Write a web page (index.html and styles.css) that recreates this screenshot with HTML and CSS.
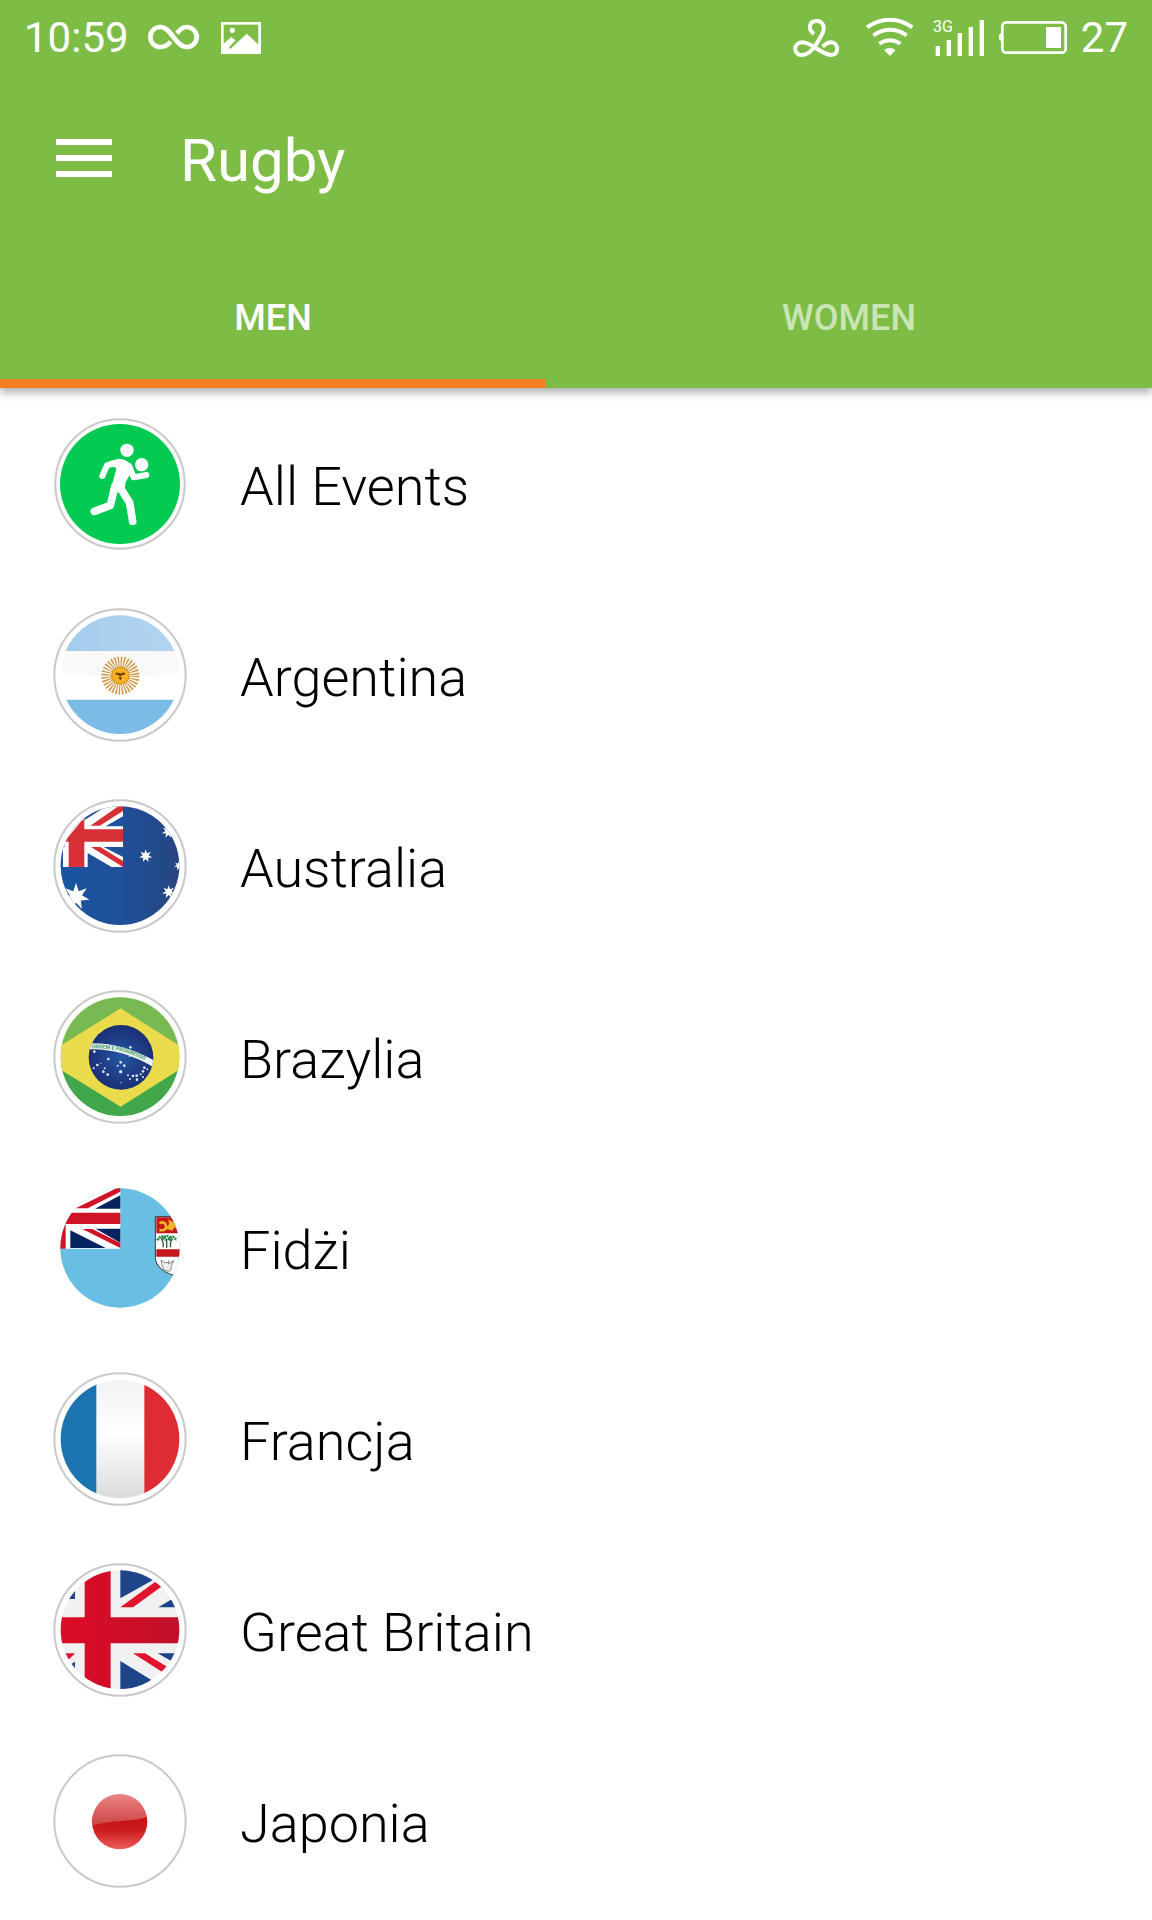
FILE: index.html
```html
<!DOCTYPE html>
<html lang="pl">
<head>
<meta charset="utf-8">
<meta name="viewport" content="width=device-width, initial-scale=1">
<title>Rugby</title>
<link rel="stylesheet" href="styles.css">
</head>
<body>
<header class="header">
  <div class="status">
    <div class="status-left">
    <span>10:59</span>
    <svg width="56" height="40" viewBox="438 54 168 120" aria-hidden="true"><path class="line butt" stroke-width="14" d="M515 125C504 139 495 141 484 141a30 30 0 1 1 0-60c33 0 45 60 79 60a30 30 0 1 0 0-60c-11 0-19 5-29 19"/></svg>
    <svg width="48" height="40" viewBox="648 54 144 120" aria-hidden="true"><rect class="line" x="664" y="70" width="112" height="88" stroke-width="8"/><circle class="solid" cx="694" cy="91" r="8"/><path class="solid" d="M664 134l27-23 13 10-20 20 4 6 49-46 41 38v22H664z"/></svg>
    </div>
    <div class="status-right">
    <svg width="58" height="40" viewBox="54 54 174 120" aria-hidden="true"><path class="line butt" stroke-width="12" d="M129 102C109 87 115 63 136 63c22 0 28 22 16 42C138 130 120 165 92 165c-26 0-26-37 2-38 30 0 56 38 88 38 22 0 22-38-2-38-11 0-16 5-25 13"/></svg>
    <svg width="58" height="40" viewBox="270 54 174 120" aria-hidden="true"><path class="line butt" stroke-width="12" d="M288 82q69-46 136 0M307 106q50-33 100 0M325 131q32-21 63 0"/><path class="solid" d="M339 150q17-12 35 0l-17 18z"/></svg>
    <svg width="52" height="40" viewBox="486 54 156 120" aria-hidden="true"><text class="network" x="486" y="95">3G</text><path class="solid" d="M494 138h13v30h-13zM527 120h13v48h-13zM560 99h13v69h-13zM593 81h13v87h-13zM626 60h13v108h-13z"/></svg>
    <svg width="68" height="40" viewBox="687 54 204 120" aria-hidden="true"><rect class="line" x="697" y="67" width="190" height="91" rx="12" stroke-width="8"/><path class="solid" d="M694 99v24q-7-2-7-7v-10q0-5 7-7zM828 81h45v63h-45z"/></svg>
    <span>27</span>
    </div>
  </div>
  <div class="toolbar">
    <button class="menu" type="button" aria-label="Menu"><svg width="56" height="38" viewBox="0 0 56 38"><path class="solid" d="M0 0h56v6H0zM0 16h56v6H0zM0 32h56v6H0z"/></svg></button>
    <h1 class="title">Rugby</h1>
  </div>
  <div class="tabs" role="tablist">
    <button class="tab tab-men" type="button" role="tab" aria-selected="true">MEN</button>
    <button class="tab tab-women" type="button" role="tab" aria-selected="false">WOMEN</button>
  </div>
</header>
<main>
<ul class="list">
  <li><a class="row" href="#all">
    <svg class="badge" viewBox="38 33 402 402" aria-hidden="true"><circle class="ring" cx="239" cy="234" r="194"/><circle fill="#05ca51" cx="239" cy="234" r="180"/>
      <g class="solid"><circle cx="260" cy="133" r="20"/><circle cx="304" cy="176" r="20"/><path d="M205 166l34-8q20 4 29 14l8 22-20 34-4 28-36 6-4-12 16-62z"/></g>
      <g class="line"><path stroke-width="18" d="M236 168l-36 10-14 32M266 180l14 34 38-7"/><path stroke-width="23" d="M224 240l-14 58-48 18M240 246l28 44 9 56"/></g></svg>
    <span class="name">All Events</span></a></li>
  <li><a class="row" href="#argentina">
    <svg class="badge" viewBox="38 37 402 402" aria-hidden="true">
      <defs><clipPath id="c-ar"><circle cx="239" cy="237" r="178"/></clipPath><linearGradient id="g-ar" x1="0" x2="1" y2="0"><stop offset="0" stop-color="#a2cdec"/><stop offset="1" stop-color="#b4d4f0"/></linearGradient></defs>
      <circle class="ring" cx="239" cy="238" r="197"/>
      <g clip-path="url(#c-ar)"><path fill="#fff" d="M60 50h360v380H60z"/><path fill="#f9f9f9" d="M60 166h360v64q-180 28-360 0z"/><path fill="url(#g-ar)" d="M60 50h360v116H60z"/><path fill="#7dbbe7" d="M60 312h360v110H60z"/></g>
      <circle cx="240" cy="240" r="42" fill="none" stroke="#cf9a4c" stroke-width="30" pathLength="64" stroke-dasharray="1 1"/><circle cx="240" cy="240" r="26" fill="#f6b21f" stroke="#d8952a" stroke-width="4"/><path fill="#6b3a10" d="M226 231h10l4 4 4-4h10v6h-9v4h-10v-4h-9zM235 244h10v4h-3v5h-4v-5h-3z"/></svg>
    <span class="name">Argentina</span></a></li>
  <li><a class="row" href="#australia">
    <svg class="badge" viewBox="38 40 402 402" aria-hidden="true">
      <defs><clipPath id="c-au"><circle cx="239" cy="240" r="178"/></clipPath><linearGradient id="g-au"><stop offset="0" stop-color="#1a559f"/><stop offset=".5" stop-color="#1f509b"/><stop offset="1" stop-color="#26457f"/></linearGradient>
      <path id="star" d="M0-10l2 6 5.800-2.200-3.400 5.200 5.400 3.200-6.300.6.800 6.200L0 4.500-4.300 9l.8-6.200-6.300-.6 5.400-3.200-3.400-5.200L-2-4z"/></defs>
      <circle class="ring" cx="239" cy="241" r="197"/>
      <g clip-path="url(#c-au)"><path fill="url(#g-au)" d="M60 60h360v362H60z"/>
        <path fill="#fff" d="M50 50h198v194H50z"/><path fill="#1f509b" d="M132 62h66l-66 42zM248 92v30h-52zM190 184h58v30zM142 202l72 42h-72zM50 195l18-6v55H50z"/>
        <path fill="#d62f36" d="M85 168v76h47v-76h116v-37H132v-30l-8 4-52 63zM150 120h28l70-44V62h-14zM152 184h28l68 42v18zM62 190l14-8-14 2z"/>
        <g fill="#fff"><use href="#star" transform="translate(107 333) scale(4.100)"/><use href="#star" transform="translate(316 211) scale(2)"/><use href="#star" transform="translate(384 138) scale(2)"/><use href="#star" transform="translate(416 240) scale(1.500)"/><use href="#star" transform="translate(385 319) scale(2)"/></g></g></svg>
    <span class="name">Australia</span></a></li>
  <li><a class="row" href="#brazylia">
    <svg class="badge" viewBox="38 42 402 402" aria-hidden="true">
      <defs><clipPath id="c-br"><circle cx="239" cy="242" r="178"/></clipPath><clipPath id="c-globe"><circle cx="242" cy="244" r="97"/></clipPath><radialGradient id="g-br"><stop offset="0" stop-color="#2457a5"/><stop offset="1" stop-color="#1b2f74"/></radialGradient></defs>
      <circle class="ring" cx="239" cy="243" r="197"/>
      <g clip-path="url(#c-br)"><path fill="#79b951" d="M60 60h360v182H60z"/><path fill="#42a64a" d="M60 242h360v182H60z"/><path fill="#eadb4c" d="M241 97l194 123v50L241 392 43 270v-50z"/></g>
      <circle cx="242" cy="244" r="97" fill="url(#g-br)"/>
      <g clip-path="url(#c-globe)"><path d="M140 211q106-5 206 56" fill="none" stroke="#e9f4ec" stroke-width="18"/><path id="motto" d="M154 217q100-3 184 50" fill="none"/><text class="motto"><textPath href="#motto">ORDEM E PROGRESSO</textPath></text></g>
      <g fill="#dce6f6"><circle cx="162" cy="227" r="4"/><circle cx="270" cy="214" r="4"/><circle cx="268" cy="240" r="3"/><circle cx="204" cy="249" r="4"/><circle cx="171" cy="267" r="4"/><circle cx="182" cy="262" r="2"/><circle cx="160" cy="277" r="3"/><circle cx="193" cy="277" r="3"/><circle cx="189" cy="287" r="4"/><circle cx="202" cy="296" r="4"/><circle cx="241" cy="259" r="4"/><circle cx="232" cy="269" r="3"/><circle cx="252" cy="269" r="4"/><circle cx="241" cy="287" r="5"/><circle cx="242" cy="320" r="2"/><circle cx="263" cy="298" r="3"/><circle cx="269" cy="309" r="3"/><circle cx="278" cy="300" r="4"/><circle cx="289" cy="299" r="4"/><circle cx="290" cy="311" r="4"/><circle cx="301" cy="295" r="3"/><circle cx="308" cy="286" r="4"/><circle cx="312" cy="275" r="4"/><circle cx="321" cy="280" r="3"/><circle cx="308" cy="303" r="3"/></g></svg>
    <span class="name">Brazylia</span></a></li>
  <li><a class="row" href="#fidzi">
    <svg class="badge" viewBox="38 45 402 402" aria-hidden="true">
      <defs><clipPath id="c-fj"><circle cx="239" cy="246" r="179"/></clipPath></defs>
      <g clip-path="url(#c-fj)"><path fill="#68bfe3" d="M50 50h380v390H50z"/>
        <path fill="#fff" d="M50 50h190v198H50z"/><path fill="#05235e" d="M240 88v40h-76zM166 188h74v42zM90 193l106 53H90z"/>
        <path fill="#cf1427" d="M50 140h190v34H76v74H50zM106 127l126-62h8v12l-98 50zM126 189h30l84 42v15z"/>
        <path fill="#fff" stroke="#333" stroke-width="3" d="M345 152h80v184q-80-20-80-62z"/><path fill="#c4161c" d="M348 154h80v48h-80zM348 250h80v22h-80z"/>
        <path fill="none" stroke="#f0b429" stroke-width="8" d="M357 172q18-8 20 8t-20 12"/><path fill="#f0b429" d="M376 188l10-14-2-14 14 8 16-4v28l-12-8-6 10z"/>
        <path fill="none" stroke="#26844f" stroke-width="8" stroke-dasharray="6 2" d="M351 223q14-22 26 0M366 220q16-22 26 4M384 222q14-20 24 2"/><path fill="none" stroke="#3c573c" stroke-width="4" d="M363 218q8 12 5 26M379 218v28M396 218q-8 12-5 26"/>
        <path fill="#eee" stroke="#888" stroke-width="3" d="M362 282q18 16 24 2l-2 10 16-10-8 18q4 18-16 12-10-4-14-32zM376 314l-6 6"/></g></svg>
    <span class="name">Fidżi</span></a></li>
  <li><a class="row" href="#francja">
    <svg class="badge" viewBox="38 34 402 402" aria-hidden="true">
      <defs><clipPath id="c-fr"><circle cx="239" cy="235" r="178"/></clipPath><linearGradient id="g-fr" x2="0" y2="1"><stop offset="0" stop-color="#f3f3f3"/><stop offset=".45" stop-color="#fff"/><stop offset="1" stop-color="#dadcdc"/></linearGradient></defs>
      <circle class="ring" cx="239" cy="235" r="197"/>
      <g clip-path="url(#c-fr)"><path fill="url(#g-fr)" d="M168 56h144v358H168z"/><path fill="#1c75b1" d="M50 50h118v370H50z"/><path fill="#dd2c33" d="M312 50h118v370H312z"/></g></svg>
    <span class="name">Francja</span></a></li>
  <li><a class="row" href="#great-britain">
    <svg class="badge" viewBox="38 38 402 402" aria-hidden="true">
      <defs><clipPath id="c-gb"><circle cx="239" cy="238" r="178"/></clipPath><linearGradient id="g-gb"><stop offset="0" stop-color="#de0c27"/><stop offset="1" stop-color="#be1029"/></linearGradient></defs>
      <circle class="ring" cx="239" cy="239" r="197"/>
      <g clip-path="url(#c-gb)"><path fill="#f1f1f1" d="M50 50h380v380H50z"/><path fill="#1e4489" d="M240 50h110v32l-110 62zM354 171l66-40v40zM240 332l92 56-20 40h-72zM352 309h70v40zM104 116v30H78zM104 334v24l-20-12z"/>
        <path fill="#e1142d" d="M240 171l104-76 22 12-88 64zM278 309h36l66 40-14 16zM60 309h44l-20 20z"/><path fill="url(#g-gb)" d="M133 50h78v151h220v78H211v151h-78V279H50v-78h83z"/></g></svg>
    <span class="name">Great Britain</span></a></li>
  <li><a class="row" href="#japonia">
    <svg class="badge" viewBox="38 40 402 402" aria-hidden="true">
      <defs><clipPath id="c-jp"><circle cx="238" cy="243" r="83"/></clipPath><linearGradient id="g-jp1" x2="0" y2="1"><stop offset="0" stop-color="#ec8585"/><stop offset="1" stop-color="#cb4343"/></linearGradient><linearGradient id="g-jp2" x2="0" y2="1"><stop offset="0" stop-color="#c41010"/><stop offset=".4" stop-color="#cb1c1c"/><stop offset="1" stop-color="#ef5e5e"/></linearGradient></defs>
      <circle class="ring" cx="239" cy="241" r="197"/>
      <g clip-path="url(#c-jp)"><path fill="url(#g-jp2)" d="M150 228h180v100H150z"/><path fill="url(#g-jp1)" d="M150 158h180v68q-30 12-85 15-60 3-95 16z"/></g></svg>
    <span class="name">Japonia</span></a></li>
</ul>
</main>
</body>
</html>
```

FILE: styles.css
```css
* {
  box-sizing: border-box;
}

body {
  margin: 0;
  background: #fff;
  color: #000;
  font-family: Roboto, "Liberation Sans", sans-serif;
}

svg {
  display: block;
  flex: none;
}

.line {
  fill: none;
  stroke: #fff;
  stroke-linecap: round;
  stroke-linejoin: round;
}

.butt {
  stroke-linecap: butt;
}

rect.line {
  stroke-linejoin: miter;
}

.solid {
  fill: #fff;
}

.header {
  position: relative;
  background: #7dbd46;
  color: #fff;
  box-shadow: 0 5px 8px rgba(0, 0, 0, 0.3);
}

.status {
  display: flex;
  align-items: center;
  justify-content: space-between;
  height: 76px;
  padding: 0 24px;
  font-size: 42px;
  line-height: 48px;
}

.status-left,
.status-right {
  display: flex;
  align-items: center;
  gap: 16px;
}

.status-right {
  gap: 14px;
}

.network {
  fill: #fff;
  font-size: 48px;
}

.toolbar {
  display: flex;
  align-items: center;
  gap: 68px;
  height: 164px;
  padding: 0 56px;
}

.menu {
  padding: 0;
  border: 0;
  background: none;
}

.title {
  margin: 0;
  padding-top: 6px;
  font-size: 60px;
  font-weight: 400;
  line-height: 72px;
}

.tabs {
  display: flex;
  height: 148px;
}

.tab {
  padding: 8px 0 0;
  border: 0;
  background: none;
  color: #fff;
  font-family: inherit;
  font-size: 36px;
  font-weight: 500;
}

.tab-men {
  flex: 546 0 0;
  box-shadow: inset 0 -9px #f57c20;
}

.tab-women {
  flex: 606 0 0;
  color: rgba(255, 255, 255, 0.6);
}

.list {
  margin: 0;
  padding: 0;
  list-style: none;
}

.row {
  display: flex;
  align-items: center;
  gap: 53px;
  height: 191px;
  padding: 0 53px;
  color: #000;
  text-decoration: none;
}

.badge {
  width: 134px;
  height: 134px;
}

.ring {
  fill: #fff;
  stroke: #cbc8c8;
  stroke-width: 6;
}

.motto {
  fill: #4a9a72;
  font-size: 16px;
  font-weight: 700;
}

.name {
  padding-top: 6px;
  font-size: 54px;
  font-weight: 300;
  line-height: 64px;
}
```
